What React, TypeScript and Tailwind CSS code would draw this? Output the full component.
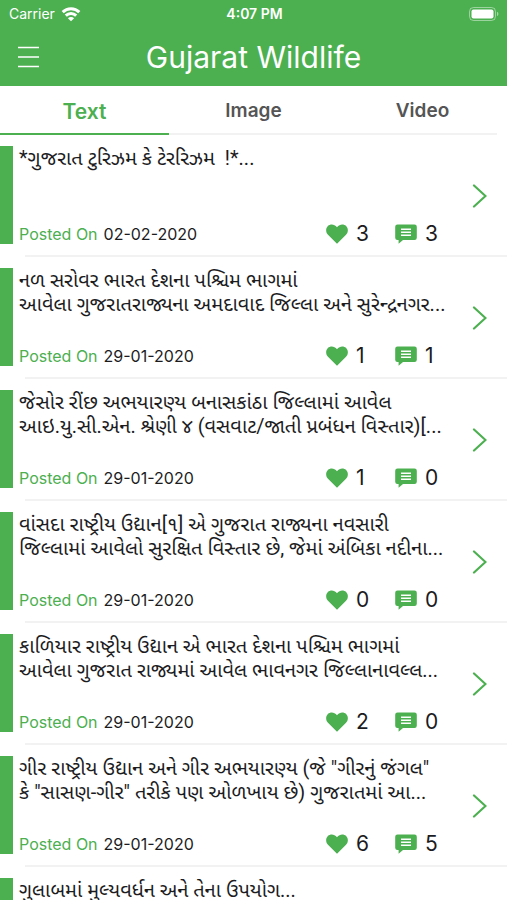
import React, { useState } from 'react';

interface Post {
  id: number;
  lines: string[];
  date: string;
  likes: number;
  comments: number;
}

const tabs = ['Text', 'Image', 'Video'];

const posts: Post[] = [
  { id: 1, lines: ['*ગુજરાત ટુરિઝમ કે ટેરરિઝમ  !*...'], date: '02-02-2020', likes: 3, comments: 3 },
  {
    id: 2,
    lines: ['નળ સરોવર ભારત દેશના પશ્ચિમ ભાગમાં', 'આવેલા ગુજરાતરાજ્યના અમદાવાદ જિલ્લા અને સુરેન્દ્રનગર...'],
    date: '29-01-2020',
    likes: 1,
    comments: 1,
  },
  {
    id: 3,
    lines: ['જેસોર રીંછ અભયારણ્ય બનાસકાંઠા જિલ્લામાં આવેલ', 'આઇ.યુ.સી.એન. શ્રેણી ૪ (વસવાટ/જાતી પ્રબંધન વિસ્તાર)[...'],
    date: '29-01-2020',
    likes: 1,
    comments: 0,
  },
  {
    id: 4,
    lines: ['વાંસદા રાષ્ટ્રીય ઉદ્યાન[૧] એ ગુજરાત રાજ્યના નવસારી', 'જિલ્લામાં આવેલો સુરક્ષિત વિસ્તાર છે, જેમાં અંબિકા નદીના...'],
    date: '29-01-2020',
    likes: 0,
    comments: 0,
  },
  {
    id: 5,
    lines: ['કાળિયાર રાષ્ટ્રીય ઉદ્યાન એ ભારત દેશના પશ્ચિમ ભાગમાં', 'આવેલા ગુજરાત રાજ્યમાં આવેલ ભાવનગર જિલ્લાનાવલ્લ...'],
    date: '29-01-2020',
    likes: 2,
    comments: 0,
  },
  {
    id: 6,
    lines: ['ગીર રાષ્ટ્રીય ઉદ્યાન અને ગીર અભયારણ્ય (જે "ગીરનું જંગલ"', 'કે "સાસણ-ગીર" તરીકે પણ ઓળખાય છે) ગુજરાતમાં આ...'],
    date: '29-01-2020',
    likes: 6,
    comments: 5,
  },
  { id: 7, lines: ['ગુલાબમાં મુલ્યવર્ધન અને તેના ઉપયોગ...'], date: '29-01-2020', likes: 0, comments: 0 },
];

const StatusBar: React.FC = () => (
  <div className="grid grid-cols-3 items-center h-7 pl-[9px] pr-[7px] text-sm">
    <div className="flex items-center gap-1.5">
      <span>Carrier</span>
      <svg className="w-5 h-4" viewBox="0 0 20 16" fill="none" stroke="currentColor" strokeWidth="3">
        <path d="M1.7 6.1a11.8 11.8 0 0 1 16.6 0" />
        <path d="M4.8 9.6a7.4 7.4 0 0 1 10.4 0" />
        <path d="M10 15.2 6.9 12.200a4.4 4.4 0 0 1 6.2 0Z" fill="currentColor" stroke="none" />
      </svg>
    </div>
    <span className="text-center font-semibold">4:07 PM</span>
    <svg className="w-8 h-4 justify-self-end" viewBox="0 0 32 16">
      <rect x="1.5" y="1.5" width="26" height="13" rx="4" fill="none" stroke="white" strokeOpacity="0.45" />
      <rect x="3.5" y="3.5" width="22" height="9" rx="2" fill="white" />
      <path d="M29 5.8v4.4a2.4 2.4 0 0 0 0-4.4Z" fill="white" fillOpacity="0.5" />
    </svg>
  </div>
);

const PostRow: React.FC<{ post: Post }> = ({ post }) => (
  <li className="flex h-[122px]">
    <div className="w-[13px] h-[98px] mt-[11px] shrink-0 bg-[#4caf50]" />
    <div className="flex flex-1 min-w-0 pl-1.5 relative">
      <div className="flex flex-col flex-1 min-w-0 pt-[11px] pb-[9px]">
        <h2 className="flex-1 text-xl leading-6 whitespace-pre text-[#1c1c1e] font-['Roboto','Noto_Sans_Gujarati','Noto_Sans',sans-serif]">
          {post.lines.join('\n')}
        </h2>
        <div className="flex items-center justify-between h-7 pr-3">
          <p className="text-base text-[#1c1c1e]">
            <span className="mr-1.5 text-[#4caf50]">Posted On</span>
            <time>{post.date}</time>
          </p>
          <div className="flex text-[21px] text-[#1c1c1e]">
            <button className="flex items-center gap-2 w-[69px]" aria-label={`${post.likes} likes`}>
              <svg className="w-[22px] h-5 text-[#4caf50]" viewBox="0 0 22 20" fill="currentColor">
                <path d="M11 19.7 2 10.8C-.5 8.2-.4 4.2 1.9 2 4.4-.3 8.4 0 11 3.2 13.6 0 17.6-.3 20.1 2c2.3 2.2 2.4 6.2-.1 8.800Z" />
              </svg>
              <span>{post.likes}</span>
            </button>
            <button className="flex items-center gap-2 w-11" aria-label={`${post.comments} comments`}>
              <svg className="w-[22px] h-5" viewBox="0 0 22 20">
                <path d="M2.5.5h17A2.3 2.3 0 0 1 21.8 2.8v11a2.3 2.3 0 0 1-2.3 2.3H8L3.6 19.8v-3.7H2.5A2.3 2.3 0 0 1 .2 13.8v-11A2.3 2.3 0 0 1 2.5.5Z" fill="#4caf50" />
                <path d="M6 5.2h10M6 8.2h10M6 11.2h10" stroke="white" strokeWidth="1.4" />
              </svg>
              <span>{post.comments}</span>
            </button>
          </div>
        </div>
      </div>
      <button className="flex items-center justify-center w-14 shrink-0" aria-label="Open post">
        <svg className="w-4 h-6 text-[#4caf50]" viewBox="0 0 16 24" fill="none" stroke="currentColor" strokeWidth="2.2" strokeLinecap="round">
          <path d="M3 1.5 14.5 12 3 22.5" />
        </svg>
      </button>
      <div className="absolute bottom-0 left-3 right-0 h-0.5 bg-[#f2f2f2]" />
    </div>
  </li>
);

export default function App() {
  const [activeTab, setActiveTab] = useState('Text');

  return (
    <div className="min-h-screen bg-white font-['Inter','Noto_Sans_Gujarati','Noto_Sans',sans-serif]">
      {/* Header */}
      <header className="bg-[#4caf50] text-white">
        <StatusBar />
        <div className="grid grid-cols-[1fr_auto_1fr] items-center h-[58px] px-[18px]">
          <button className="justify-self-start" aria-label="Menu">
            <svg className="w-[22px] h-6" viewBox="0 0 22 24" stroke="currentColor" strokeWidth="1.6">
              <path d="M0 2.500h21M0 12h21M0 21.500h21" />
            </svg>
          </button>
          <h1 className="text-3xl">Gujarat Wildlife</h1>
        </div>
      </header>

      {/* Tabs */}
      <nav className="h-[49px] relative">
        <div className="absolute bottom-0 left-0 right-2.5 h-0.5 bg-[#f2f2f2]" />
        <div className="relative grid grid-cols-3 h-full">
          {tabs.map((tab) => (
            <button
              key={tab}
              onClick={() => setActiveTab(tab)}
              className={
                activeTab === tab
                  ? 'pt-1 border-b-2 border-[#4caf50] text-[21px] font-semibold text-[#4caf50]'
                  : 'pt-1 border-b-2 border-transparent text-[19px] font-semibold text-[#555555]'
              }
            >
              {tab}
            </button>
          ))}
        </div>
      </nav>

      {/* Posts */}
      <ul>
        {posts.map((post) => (
          <PostRow key={post.id} post={post} />
        ))}
      </ul>
    </div>
  );
}
